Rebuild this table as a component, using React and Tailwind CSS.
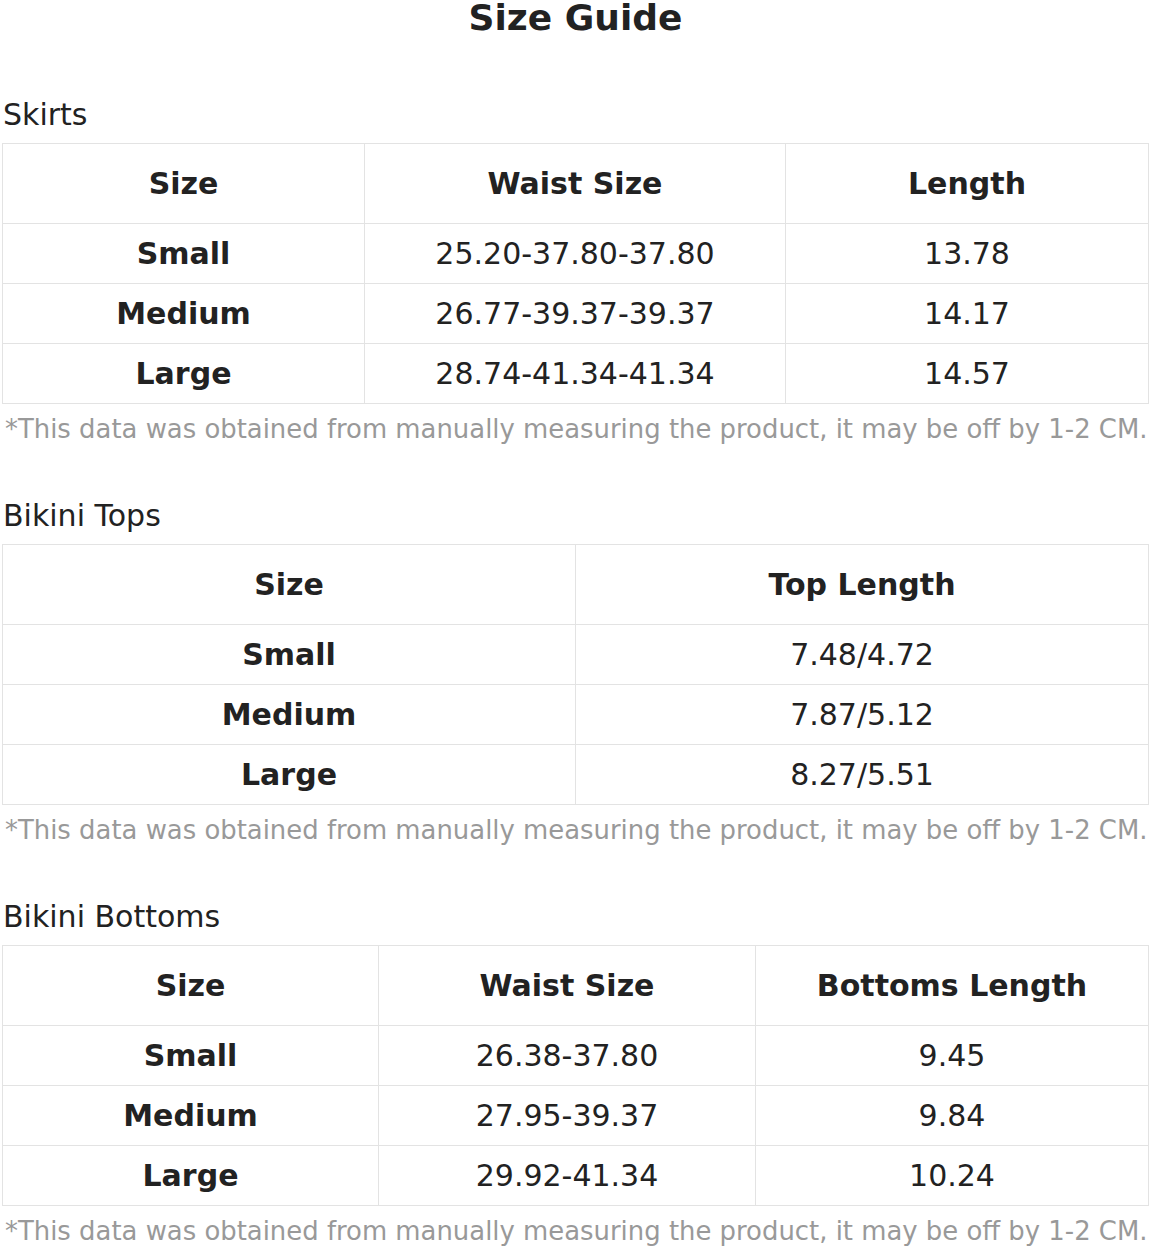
import React from 'react';

const sections = [
  {
    title: 'Skirts',
    headers: ['Size', 'Waist Size', 'Length'],
    widths: ['w-[362px]', 'w-[421px]', 'w-[363px]'],
    rows: [
      ['Small', '25.20-37.80-37.80', '13.78'],
      ['Medium', '26.77-39.37-39.37', '14.17'],
      ['Large', '28.74-41.34-41.34', '14.57'],
    ],
  },
  {
    title: 'Bikini Tops',
    headers: ['Size', 'Top Length'],
    widths: ['w-[573px]', 'w-[573px]'],
    rows: [
      ['Small', '7.48/4.72'],
      ['Medium', '7.87/5.12'],
      ['Large', '8.27/5.51'],
    ],
  },
  {
    title: 'Bikini Bottoms',
    headers: ['Size', 'Waist Size', 'Bottoms Length'],
    widths: ['w-[376px]', 'w-[377px]', 'w-[393px]'],
    rows: [
      ['Small', '26.38-37.80', '9.45'],
      ['Medium', '27.95-39.37', '9.84'],
      ['Large', '29.92-41.34', '10.24'],
    ],
  },
];

const SizeTable = ({ section }) => (
  <div className="mb-[58px]">
    <h2 className="text-[30px] leading-none font-normal text-[#222] pl-[3px] mb-[13px]">{section.title}</h2>
    <table className="w-[1146px] ml-[2px] border-collapse table-fixed">
      <thead>
        <tr className="h-[80px]">
          {section.headers.map((h, i) => (
            <th key={i} className={`${section.widths[i]} border border-[#e3e3e3] text-center font-bold text-[30px] text-[#222]`}>
              {h}
            </th>
          ))}
        </tr>
      </thead>
      <tbody>
        {section.rows.map((row, r) => (
          <tr key={r} className="h-[60px]">
            {row.map((cell, c) => (
              <td
                key={c}
                className={`border border-[#e3e3e3] text-center text-[30px] text-[#222] ${c === 0 ? 'font-bold' : 'font-normal'}`}
              >
                {cell}
              </td>
            ))}
          </tr>
        ))}
      </tbody>
    </table>
    <p className="text-[25.9px] leading-none whitespace-nowrap text-[#999] pl-[5px] mt-[13px]">
      *This data was obtained from manually measuring the product, it may be off by 1-2 CM.
    </p>
  </div>
);

export default function App() {
  return (
    <div className="w-[1151px] bg-white font-['DejaVu_Sans',sans-serif]">
      <h1 className="text-[36px] leading-none font-bold text-center text-[#222] mb-[64px]">Size Guide</h1>
      {sections.map((s, i) => (
        <SizeTable key={i} section={s} />
      ))}
    </div>
  );
}
